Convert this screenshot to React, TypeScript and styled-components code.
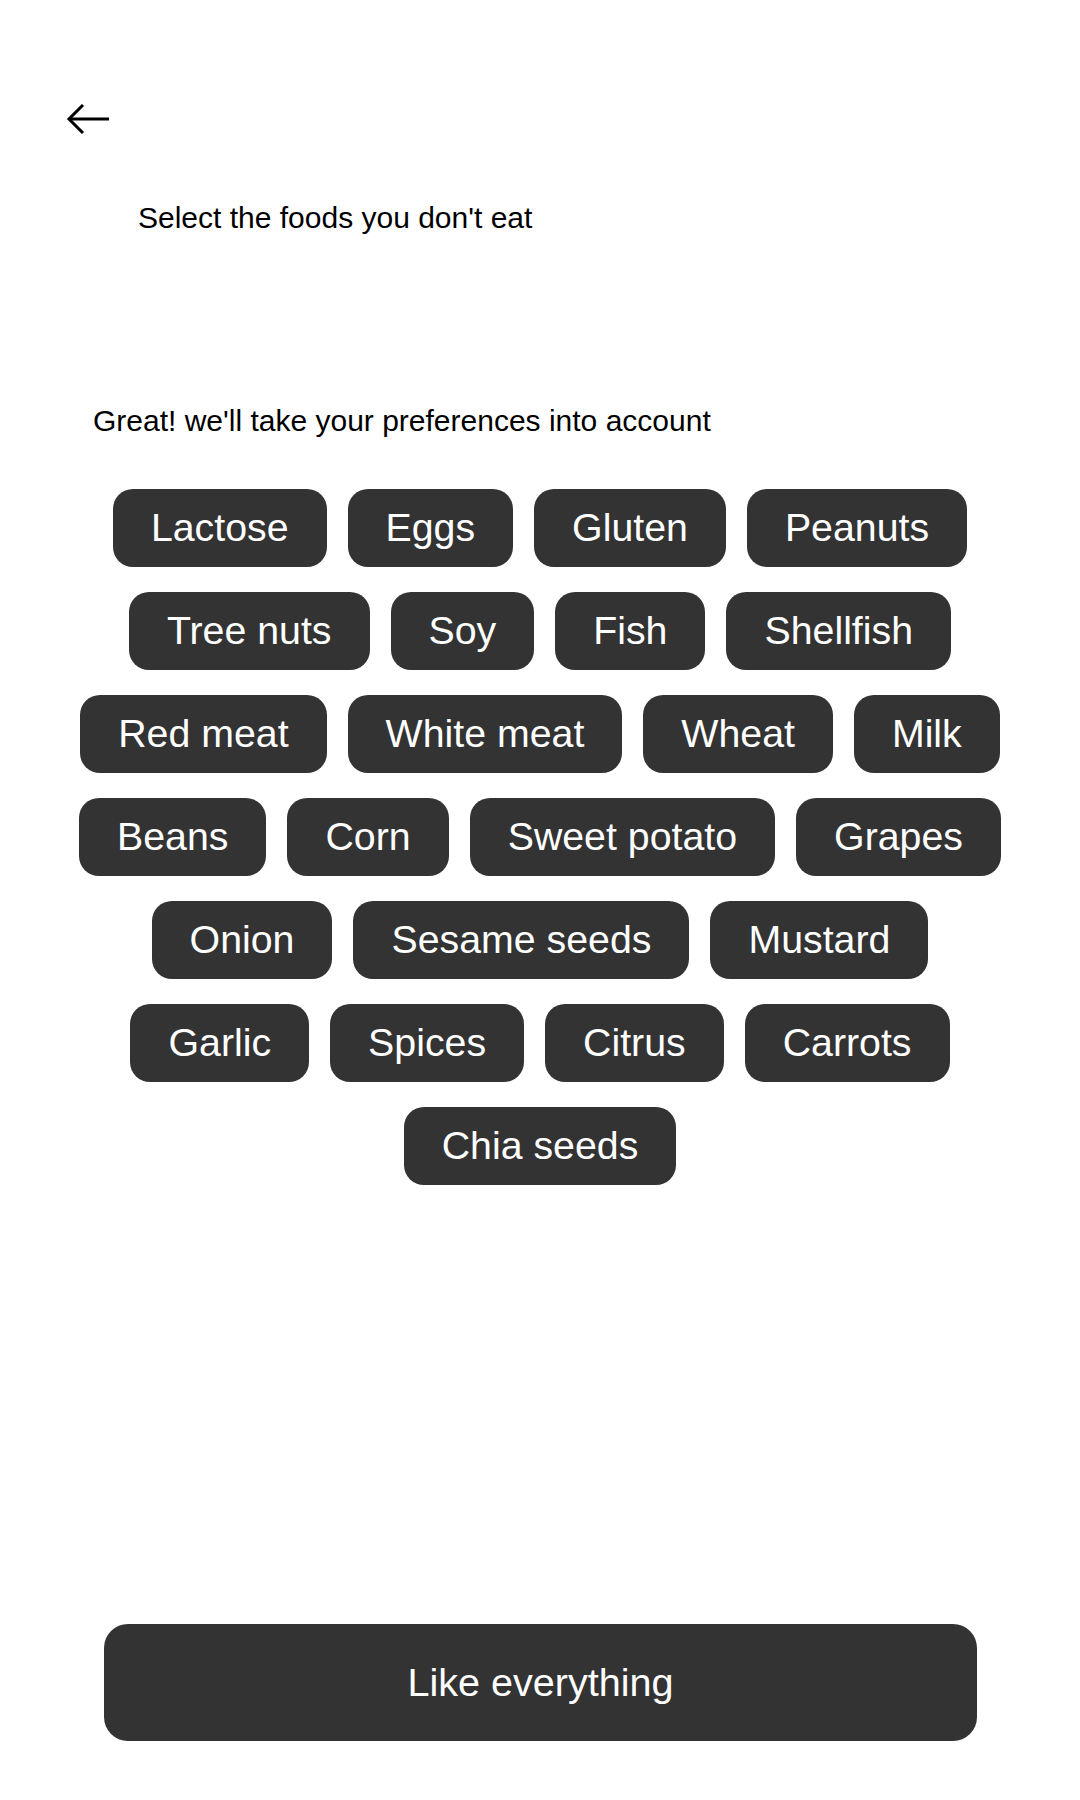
import { useState } from "react";
import styled, { createGlobalStyle } from "styled-components";

const GlobalStyle = createGlobalStyle`
  html, body { margin: 0; padding: 0; background: #fff; }
  body { font-family: "Liberation Sans", Arial, sans-serif; color: #000; }
  * { box-sizing: border-box; }
`;

const Page = styled.div`
  width: 1080px; min-height: 1800px;
  display: flex; flex-direction: column;
  padding-bottom: 59px;
`;

const Header = styled.div`
  padding: 104px 0 0 66px;
  display: flex;
`;

const BackButton = styled.button`
  border: 0; background: none; padding: 0; cursor: pointer;
  width: 44px; height: 30px;
  display: flex; align-items: center;
  svg { display: block; }
`;

const Title = styled.h1`
  margin: 67px 0 0; padding-left: 138px;
  font-size: 30px; line-height: 34px; font-weight: 400;
`;

const Subtitle = styled.p`
  margin: 169px 0 0; padding-left: 93px;
  font-size: 30px; line-height: 34px;
`;

const ChipGrid = styled.div`
  margin-top: 51px; padding: 0 65px;
  display: flex; flex-wrap: wrap; justify-content: center;
  column-gap: 21px; row-gap: 25px;
`;

const Chip = styled.button<{ $on: boolean }>`
  height: 78px; padding: 0 38px;
  border: 0; border-radius: 20px;
  background: ${({ $on }) => ($on ? "#5a5a5a" : "#333")};
  color: #fff;
  font-family: inherit; font-size: 39.3px; line-height: 1;
  display: flex; align-items: center; justify-content: center;
  cursor: pointer; white-space: nowrap;
`;

const PrimaryButton = styled.button`
  margin: auto 103px 0 104px;
  height: 117px;
  border: 0; border-radius: 24px;
  background: #333; color: #fff;
  font-family: inherit; font-size: 39.6px;
  cursor: pointer;
`;

const FOODS = [
  "Lactose", "Eggs", "Gluten", "Peanuts",
  "Tree nuts", "Soy", "Fish", "Shellfish",
  "Red meat", "White meat", "Wheat", "Milk",
  "Beans", "Corn", "Sweet potato", "Grapes",
  "Onion", "Sesame seeds", "Mustard",
  "Garlic", "Spices", "Citrus", "Carrots",
  "Chia seeds",
];

export default function App() {
  const [picked, setPicked] = useState<string[]>([]);
  const toggle = (f: string) =>
    setPicked((p) => (p.includes(f) ? p.filter((x) => x !== f) : [...p, f]));

  return (
    <>
      <GlobalStyle />
      <Page>
        <Header>
          <BackButton aria-label="Back">
            <svg width="44" height="30" viewBox="0 0 44 30" fill="none" stroke="#000" strokeWidth="3">
              <path d="M3 15H43" />
              <path d="M17 1L3 15l14 14" />
            </svg>
          </BackButton>
        </Header>
        <Title>Select the foods you don't eat</Title>
        <Subtitle>Great! we'll take your preferences into account</Subtitle>
        <ChipGrid>
          {FOODS.map((f) => (
            <Chip key={f} $on={picked.includes(f)} onClick={() => toggle(f)}>
              {f}
            </Chip>
          ))}
        </ChipGrid>
        <PrimaryButton onClick={() => setPicked([])}>Like everything</PrimaryButton>
      </Page>
    </>
  );
}
